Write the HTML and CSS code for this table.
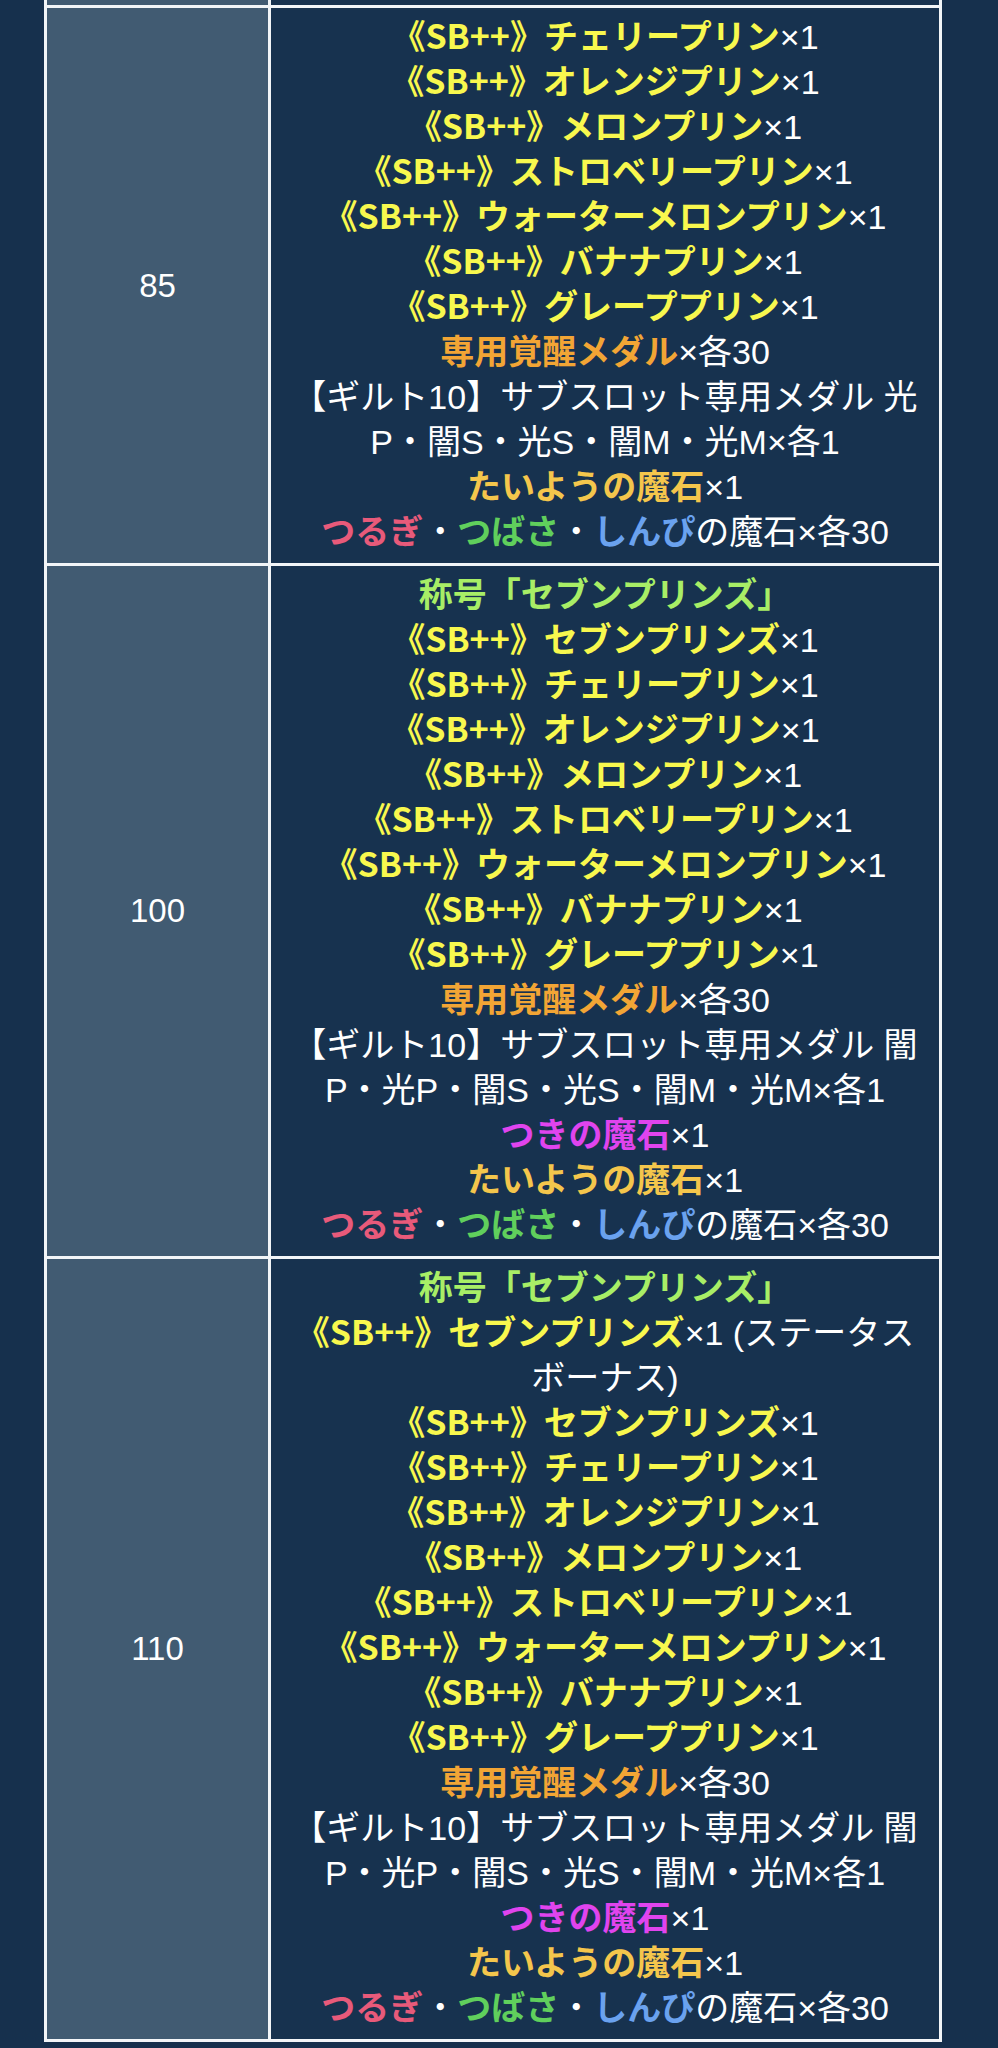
FILE: index.html
```html
<!DOCTYPE html>
<html lang="ja">
<head>
<meta charset="utf-8">
<title>報酬一覧</title>
<link rel="stylesheet" href="styles.css">
</head>
<body>
<div class="wrap">
<table class="rewards">
<colgroup><col class="c-lv"><col class="c-rw"></colgroup>
<tbody>
<tr class="cut"><td class="lv"></td><td class="rw"></td></tr>
<tr>
<td class="lv">85</td>
<td class="rw">
<div class="ln"><span class="sb">《SB++》チェリープリン</span>×1</div>
<div class="ln"><span class="sb">《SB++》オレンジプリン</span>×1</div>
<div class="ln"><span class="sb">《SB++》メロンプリン</span>×1</div>
<div class="ln"><span class="sb">《SB++》ストロベリープリン</span>×1</div>
<div class="ln"><span class="sb">《SB++》ウォーターメロンプリン</span>×1</div>
<div class="ln"><span class="sb">《SB++》バナナプリン</span>×1</div>
<div class="ln"><span class="sb">《SB++》グレーププリン</span>×1</div>
<div class="ln"><span class="medal">専用覚醒メダル</span>×各30</div>
<div class="ln">【ギルト10】サブスロット専用メダル 光<br>P・闇S・光S・闇M・光M×各1</div>
<div class="ln"><span class="sun">たいようの魔石</span>×1</div>
<div class="ln"><span class="sword">つるぎ</span>・<span class="wing">つばさ</span>・<span class="myst">しんぴ</span>の魔石×各30</div>
</td>
</tr>
<tr>
<td class="lv">100</td>
<td class="rw">
<div class="ln"><span class="title">称号「セブンプリンズ」</span></div>
<div class="ln"><span class="sb">《SB++》セブンプリンズ</span>×1</div>
<div class="ln"><span class="sb">《SB++》チェリープリン</span>×1</div>
<div class="ln"><span class="sb">《SB++》オレンジプリン</span>×1</div>
<div class="ln"><span class="sb">《SB++》メロンプリン</span>×1</div>
<div class="ln"><span class="sb">《SB++》ストロベリープリン</span>×1</div>
<div class="ln"><span class="sb">《SB++》ウォーターメロンプリン</span>×1</div>
<div class="ln"><span class="sb">《SB++》バナナプリン</span>×1</div>
<div class="ln"><span class="sb">《SB++》グレーププリン</span>×1</div>
<div class="ln"><span class="medal">専用覚醒メダル</span>×各30</div>
<div class="ln">【ギルト10】サブスロット専用メダル 闇<br>P・光P・闇S・光S・闇M・光M×各1</div>
<div class="ln"><span class="moon">つきの魔石</span>×1</div>
<div class="ln"><span class="sun">たいようの魔石</span>×1</div>
<div class="ln"><span class="sword">つるぎ</span>・<span class="wing">つばさ</span>・<span class="myst">しんぴ</span>の魔石×各30</div>
</td>
</tr>
<tr>
<td class="lv">110</td>
<td class="rw">
<div class="ln"><span class="title">称号「セブンプリンズ」</span></div>
<div class="ln"><span class="sb">《SB++》セブンプリンズ</span>×1 (ステータス<br>ボーナス)</div>
<div class="ln"><span class="sb">《SB++》セブンプリンズ</span>×1</div>
<div class="ln"><span class="sb">《SB++》チェリープリン</span>×1</div>
<div class="ln"><span class="sb">《SB++》オレンジプリン</span>×1</div>
<div class="ln"><span class="sb">《SB++》メロンプリン</span>×1</div>
<div class="ln"><span class="sb">《SB++》ストロベリープリン</span>×1</div>
<div class="ln"><span class="sb">《SB++》ウォーターメロンプリン</span>×1</div>
<div class="ln"><span class="sb">《SB++》バナナプリン</span>×1</div>
<div class="ln"><span class="sb">《SB++》グレーププリン</span>×1</div>
<div class="ln"><span class="medal">専用覚醒メダル</span>×各30</div>
<div class="ln">【ギルト10】サブスロット専用メダル 闇<br>P・光P・闇S・光S・闇M・光M×各1</div>
<div class="ln"><span class="moon">つきの魔石</span>×1</div>
<div class="ln"><span class="sun">たいようの魔石</span>×1</div>
<div class="ln"><span class="sword">つるぎ</span>・<span class="wing">つばさ</span>・<span class="myst">しんぴ</span>の魔石×各30</div>
</td>
</tr>
</tbody>
</table>
</div>
</body>
</html>
```
FILE: styles.css
```css
html, body {
  margin: 0;
  padding: 0;
  background: #16304d;
}
body {
  font-family: "Liberation Sans", "Noto Sans CJK JP", sans-serif;
  color: #ffffff;
  font-size: 34px;
  line-height: 45px;
}
.wrap {
  padding: 0 0 0 44px;
}
.rewards {
  width: 898px;
  border-collapse: collapse;
  table-layout: fixed;
}
.c-lv { width: 224px; }
.rewards td {
  border: 3px solid #f2f5f8;
  text-align: center;
  vertical-align: middle;
  padding: 7px 4px 8px;
}
.rewards td.lv {
  background: #415b72;
  font-size: 33px;
}
.rewards td.rw {
  background: #17324f;
}
.rewards tr.cut td {
  border-top: none;
  height: 5px;
  padding: 0;
  line-height: 0;
}
.ln {
  white-space: nowrap;
  line-height: 45px;
}
.sb, .title, .medal, .sun, .moon, .sword, .wing, .myst {
  font-family: "Noto Sans CJK JP", sans-serif;
  font-weight: 700;
  line-height: 1;
}
.sb { color: #f8f84e; }
.title { color: #a8ee66; }
.medal { color: #f2a535; }
.sun { color: #f4c64c; }
.moon { color: #e044ee; }
.sword { color: #e85a7a; }
.wing { color: #60cf5c; }
.myst { color: #6aa2ef; }
```
